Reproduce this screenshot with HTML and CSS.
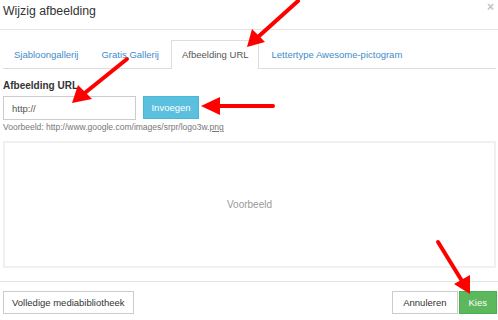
FILE: index.html
```html
<!DOCTYPE html>
<html lang="nl">
<head>
  <meta charset="UTF-8" />
  <title>Wijzig afbeelding</title>
  <link rel="stylesheet" href="styles.css">
</head>
<body>
  <div class="modal">
    <div class="modal-header">
      <h4>Wijzig afbeelding</h4>
      <span class="close">&times;</span>
    </div>

    <div class="modal-body">
      <ul class="tabs">
        <li><a>Sjabloongallerij</a></li>
        <li><a>Gratis Gallerij</a></li>
        <li class="active"><a>Afbeelding URL</a></li>
        <li><a>Lettertype Awesome-pictogram</a></li>
      </ul>

      <label class="field-label">Afbeelding URL</label>
      <div class="url-row">
        <input type="text" class="url-input" value="http://" />
        <button class="btn btn-info">Invoegen</button>
      </div>
      <p class="hint">Voorbeeld: http://www.google.com/images/srpr/logo3w.<u>png</u></p>

      <div class="preview">Voorbeeld</div>
    </div>

    <div class="modal-footer">
      <button class="btn">Volledige mediabibliotheek</button>
      <div class="footer-right">
        <button class="btn">Annuleren</button>
        <button class="btn btn-success">Kies</button>
      </div>
    </div>

    <!-- red annotation arrows over the screenshot -->
    <svg class="arrows" width="498" height="320" viewBox="0 0 498 320">
      <g stroke="#f00" stroke-width="4" fill="#f00" stroke-linecap="round">
        <line x1="298" y1="1" x2="258" y2="37" />
        <polygon points="247,47 252,29 265,42" stroke="none" />

        <line x1="127" y1="59" x2="86" y2="92" />
        <polygon points="72,103 78,85 92,99" stroke="none" />

        <line x1="273" y1="106" x2="216" y2="106" />
        <polygon points="201,106 220,97 220,115" stroke="none" />

        <line x1="438" y1="242" x2="462" y2="281" />
        <polygon points="470,294 454,284 470,275" stroke="none" />
      </g>
    </svg>
  </div>
</body>
</html>
```

FILE: styles.css
```css
body {
  margin: 0;
  padding: 0;
  font-family: "Liberation Sans", Arial, sans-serif;
  color: #333;
  background: #fff;
}

.modal {
  position: relative;
  width: 498px;
  height: 320px;
  overflow: hidden;
}

.modal-header {
  height: 29px;
  border-bottom: 1px solid #e5e5e5;
  display: flex;
  justify-content: space-between;
  padding: 0 4px 0 3px;
}

.modal-header h4 {
  margin: 3px 0 0;
  font-size: 12.3px;
  font-weight: normal;
  line-height: 16px;
  color: #333;
}

.close {
  font-size: 12px;
  line-height: 14px;
  color: #c4c4c4;
  font-weight: bold;
}

.modal-body {
  padding: 10px 2px 0 3px;
}

.tabs {
  list-style: none;
  margin: 0;
  padding: 0;
  display: flex;
  border-bottom: 1px solid #ddd;
  height: 28px;
}

.tabs li {
  margin-right: 2px;
}

.tabs a {
  display: block;
  padding: 7px 9px 6px 10px;
  line-height: 14px;
  font-size: 9.5px;
  color: #428bca;
  border: 1px solid transparent;
  border-bottom: none;
}

.tabs .active a {
  color: #555;
  background: #fff;
  border-color: #ddd;
  height: 15px;
}

.field-label {
  display: block;
  margin-top: 11px;
  font-size: 10px;
  font-weight: bold;
  line-height: 12px;
  color: #333;
}

.url-row {
  display: flex;
  gap: 7px;
  margin-top: 4px;
}

.url-input {
  box-sizing: border-box;
  width: 133px;
  height: 24px;
  margin: 0;
  padding: 0 8px;
  border: 1px solid #ccc;
  font-family: inherit;
  font-size: 9.5px;
  color: #555;
}

.btn {
  box-sizing: border-box;
  height: 23px;
  margin: 0;
  padding: 0 8px;
  font-family: inherit;
  font-size: 9.5px;
  color: #333;
  background: #fff;
  border: 1px solid #ccc;
}

.btn-info {
  width: 56px;
  padding: 0;
  color: #fff;
  background: #5bc0de;
  border-color: #46b8da;
}

.btn-success {
  color: #fff;
  background: #5cb85c;
  border-color: #4cae4c;
}

.hint {
  margin: 2px 0 0;
  font-size: 8.5px;
  line-height: 11px;
  color: #777;
}

.preview {
  box-sizing: border-box;
  height: 127px;
  margin-top: 8px;
  border: 2px solid #f0f0f0;
  display: flex;
  align-items: center;
  justify-content: center;
  font-size: 10px;
  color: #999;
}

.modal-footer {
  margin-top: 13px;
  border-top: 1px solid #e5e5e5;
  padding: 9px 1px 0 3px;
  display: flex;
  justify-content: space-between;
}

.footer-right {
  display: flex;
  gap: 1px;
}

.footer-right .btn {
  padding: 0 10px;
}

.footer-right .btn-success {
  padding: 0 9px;
}

.arrows {
  position: absolute;
  left: 0;
  top: 0;
}
```
